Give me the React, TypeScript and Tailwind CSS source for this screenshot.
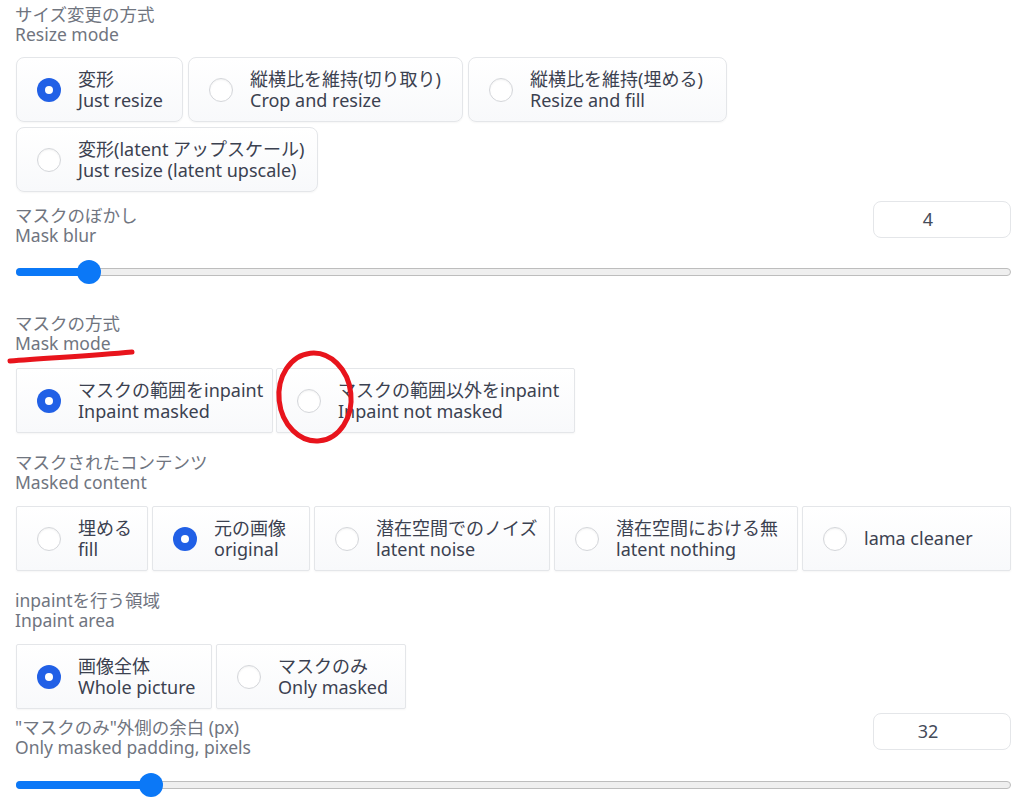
import React from 'react';

type Choice = { ja?: string; en: string; w: string };

const font = { fontFamily: '"Noto Sans", "Noto Sans CJK JP", sans-serif' };

function Radio({ checked }: { checked: boolean }) {
  return checked ? (
    <span className="w-6 h-6 shrink-0 rounded-full bg-[#2160e6] flex items-center justify-center">
      <span className="w-2 h-2 rounded-full bg-white" />
    </span>
  ) : (
    <span className="w-6 h-6 shrink-0 rounded-full border border-[#d4d6da] bg-white shadow-[inset_0_1px_2px_rgba(0,0,0,0.06)]" />
  );
}

function Label({ ja, en }: { ja: string; en: string }) {
  return (
    <div className="pt-[4px] pl-[15px] text-[17.5px] leading-[20px] text-[#70757f]">
      <div>{ja}</div>
      <div>{en}</div>
    </div>
  );
}

function Options({ items, selected, rounded, gap }: { items: Choice[]; selected: number; rounded: string; gap: string }) {
  return (
    <div className={`flex flex-wrap pl-[16px] ${gap}`}>
      {items.map((it, i) => (
        <div
          key={it.en}
          className={`${it.w} h-[65px] flex items-center gap-[17px] pl-[20px] border border-[#e4e6e9] bg-gradient-to-b from-white to-[#f8f9fb] shadow-[0_1px_2px_rgba(0,0,0,0.04)] ${rounded}`}
        >
          <Radio checked={i === selected} />
          <div className="text-[18px] leading-[21px] text-[#3b4150] whitespace-nowrap">
            {it.ja && <div>{it.ja}</div>}
            <div>{it.en}</div>
          </div>
        </div>
      ))}
    </div>
  );
}

function Slider({ pos }: { pos: number }) {
  return (
    <div className="pl-[16px] pr-[13px] h-6 flex items-center">
      <div className="relative w-full h-[8px] rounded-full bg-[#efefef] border border-[#bdbdbd]">
        <div className="absolute -left-px -top-px h-[8px] rounded-full bg-[#0b78f7]" style={{ width: pos }} />
        <div className="absolute top-1/2 -translate-y-1/2 -translate-x-1/2 w-6 h-6 rounded-full bg-[#0b78f7]" style={{ left: pos }} />
      </div>
    </div>
  );
}

function NumberBox({ value }: { value: string }) {
  return (
    <div className="w-[138px] h-[37px] mr-[13px] pr-[28px] rounded-lg border border-[#e4e6e9] bg-white flex items-center justify-center text-[18px] text-[#444b59]">
      {value}
    </div>
  );
}

export default function App() {
  const resize: Choice[] = [
    { ja: '変形', en: 'Just resize', w: 'w-[167px]' },
    { ja: '縦横比を維持(切り取り)', en: 'Crop and resize', w: 'w-[275px]' },
    { ja: '縦横比を維持(埋める)', en: 'Resize and fill', w: 'w-[259px]' },
    { ja: '変形(latent アップスケール)', en: 'Just resize (latent upscale)', w: 'w-[302px]' },
  ];
  const maskMode: Choice[] = [
    { ja: 'マスクの範囲をinpaint', en: 'Inpaint masked', w: 'w-[257px]' },
    { ja: 'マスクの範囲以外をinpaint', en: 'Inpaint not masked', w: 'w-[299px]' },
  ];
  const content: Choice[] = [
    { ja: '埋める', en: 'fill', w: 'w-[132px]' },
    { ja: '元の画像', en: 'original', w: 'w-[158px]' },
    { ja: '潜在空間でのノイズ', en: 'latent noise', w: 'w-[236px]' },
    { ja: '潜在空間における無', en: 'latent nothing', w: 'w-[244px]' },
    { en: 'lama cleaner', w: 'w-[209px]' },
  ];
  const area: Choice[] = [
    { ja: '画像全体', en: 'Whole picture', w: 'w-[196px]' },
    { ja: 'マスクのみ', en: 'Only masked', w: 'w-[190px]' },
  ];

  return (
    <div className="relative w-[1024px] h-[808px] bg-white overflow-hidden" style={font}>
      <Label ja="サイズ変更の方式" en="Resize mode" />
      <div className="mt-[13px]">
        <Options items={resize} selected={0} rounded="rounded-lg" gap="gap-[5px]" />
      </div>

      <div className="mt-[9px] flex justify-between items-start">
        <Label ja="マスクのぼかし" en="Mask blur" />
        <NumberBox value="4" />
      </div>
      <div className="mt-[15px]">
        <Slider pos={72} />
      </div>

      <div className="mt-[25px]">
        <Label ja="マスクの方式" en="Mask mode" />
      </div>
      <div className="mt-[15px]">
        <Options items={maskMode} selected={0} rounded="rounded-[2px]" gap="gap-[3px]" />
      </div>

      <div className="mt-[15px]">
        <Label ja="マスクされたコンテンツ" en="Masked content" />
      </div>
      <div className="mt-[14px]">
        <Options items={content} selected={1} rounded="rounded-[2px]" gap="gap-1" />
      </div>

      <div className="mt-[15px]">
        <Label ja="inpaintを行う領域" en="Inpaint area" />
      </div>
      <div className="mt-[14px]">
        <Options items={area} selected={0} rounded="rounded-[2px]" gap="gap-1" />
      </div>

      <div className="mt-[4px] flex justify-between items-start">
        <Label ja={'"マスクのみ"外側の余白 (px)'} en="Only masked padding, pixels" />
        <NumberBox value="32" />
      </div>
      <div className="mt-[16px]">
        <Slider pos={134} />
      </div>

      {/* hand-drawn red annotations */}
      <svg className="absolute left-0 top-0 pointer-events-none" width="1024" height="808">
        <path d="M10 361 C 45 358, 90 356, 132 352" stroke="#e8141c" strokeWidth="5" strokeLinecap="round" fill="none" />
        <ellipse cx="315" cy="397" rx="36" ry="44" stroke="#e8141c" strokeWidth="5" fill="none" transform="rotate(-6 315 397)" />
      </svg>
    </div>
  );
}
